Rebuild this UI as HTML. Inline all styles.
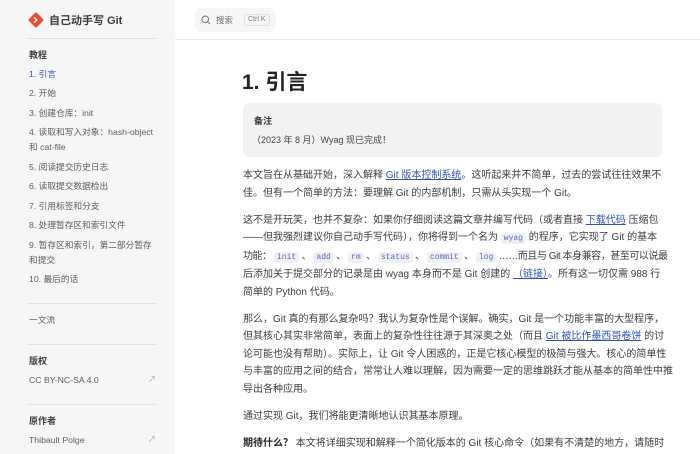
<!DOCTYPE html>
<html><head><meta charset="utf-8"><style>
*{margin:0;padding:0;box-sizing:border-box}
html,body{width:700px;height:454px;overflow:hidden}
body{background:#fff;font-family:"Liberation Sans","Noto Sans CJK SC",sans-serif;color:#3c3c43;position:relative}
.side{position:absolute;left:0;top:0;width:175px;height:454px;background:#f6f6f7}
.a{position:absolute;white-space:nowrap}
.si{left:29px;font-size:8.7px;color:#5c5c63;line-height:15px}
.hr{position:absolute;left:28px;width:128px;height:1px;background:#e2e2e3}
.h{left:29px;font-size:9px;font-weight:bold;color:#3c3c43}
.ext{position:absolute;left:148px;font-size:8px;color:#999}
.main{position:absolute;left:243px;width:430px;height:287px;overflow:hidden;font-size:10px;line-height:17.5px;color:#3c3c43;white-space:nowrap}
.main p{margin-bottom:9.5px}
a{color:#3451b2;text-decoration:underline}
code{font-family:"Liberation Mono",monospace;font-size:8px;background:#eef0f5;color:#5a6aa8;padding:1px 3px;border-radius:3px;letter-spacing:0}
</style></head><body>
<div class="side">
<svg class="a" style="left:28px;top:12px" width="16" height="16" viewBox="0 0 16 16"><rect x="2.3" y="2.3" width="11.4" height="11.4" rx="1.5" transform="rotate(45 8 8)" fill="#e84e31"/><path d="M6 5.5l3 2.5-3 2.5" stroke="#fff" stroke-width="1.3" fill="none"/></svg>
<div class="a" style="left:49px;top:12px;font-size:11px;font-weight:bold;color:#3c3c43">自己动手写 Git</div>
<div class="hr" style="top:38px"></div>
<div class="a h" style="top:48px">教程</div>
<div class="a si" style="top:67px;color:#3451b2">1. 引言</div>
<div class="a si" style="top:86px">2. 开始</div>
<div class="a si" style="top:106px">3. 创建仓库：init</div>
<div class="a si" style="top:125px">4. 读取和写入对象：hash-object<br>和 cat-file</div>
<div class="a si" style="top:160px">5. 阅读提交历史日志</div>
<div class="a si" style="top:179px">6. 读取提交数据检出</div>
<div class="a si" style="top:199px">7. 引用标签和分支</div>
<div class="a si" style="top:218px">8. 处理暂存区和索引文件</div>
<div class="a si" style="top:238px">9. 暂存区和索引，第二部分暂存<br>和提交</div>
<div class="a si" style="top:272px">10. 最后的话</div>
<div class="hr" style="top:303px"></div>
<div class="a si" style="top:313px">一文流</div>
<div class="hr" style="top:344px"></div>
<div class="a h" style="top:354px">版权</div>
<div class="a si" style="top:373px">CC BY-NC-SA 4.0</div><div class="ext" style="top:374px">↗</div>
<div class="hr" style="top:404px"></div>
<div class="a h" style="top:414px">原作者</div>
<div class="a si" style="top:433px">Thibault Polge</div><div class="ext" style="top:434px">↗</div>
</div>
<div class="a" style="left:175px;top:39px;width:525px;height:1px;background:#e8e8ea"></div>
<div class="a" style="left:195px;top:8px;width:81px;height:24px;background:#f6f6f7;border-radius:7px"></div>
<svg class="a" style="left:201px;top:15px" width="10" height="10" viewBox="0 0 10 10"><circle cx="4.3" cy="4.3" r="3.3" stroke="#777" fill="none"/><path d="M6.8 6.8L9 9" stroke="#777"/></svg>
<div class="a" style="left:216px;top:14px;font-size:8.5px;color:#777">搜索</div>
<div class="a" style="left:244px;top:14px;font-size:7px;color:#777;border:1px solid #e2e2e3;padding:0 3px;border-radius:3px;line-height:10px">Ctrl K</div>
<div class="a" style="left:242px;top:66px;font-size:21px;font-weight:bold;color:#222">1. 引言</div>
<div class="a" style="left:243px;top:103px;width:419px;height:54px;background:#f1f2f4;border-radius:6px"></div>
<div class="a" style="left:254px;top:114px;font-size:9px;font-weight:bold;color:#333">备注</div>
<div class="a" style="left:252px;top:133px;font-size:9px;color:#444">（2023 年 8 月）Wyag 现已完成！</div>
<div class="main" style="top:167px">
<p>本文旨在从基础开始，深入解释 <a>Git 版本控制系统</a>。这听起来并不简单，过去的尝试往往效果不<br>佳。但有一个简单的方法：要理解 Git 的内部机制，只需从头实现一个 Git。</p>
<p>这不是开玩笑，也并不复杂：如果你仔细阅读这篇文章并编写代码（或者直接 <a>下载代码</a> 压缩包<br>——但我强烈建议你自己动手写代码），你将得到一个名为 <code>wyag</code> 的程序，它实现了 Git 的基本<br><span style="letter-spacing:-0.45px">功能： <code>init</code> 、 <code>add</code> 、 <code>rm</code> 、 <code>status</code> 、 <code>commit</code> 、 <code>log</code> ……而且与 Git 本身兼容，甚至可以说最</span><br>后添加关于提交部分的记录是由 wyag 本身而不是 Git 创建的 <a>（链接）</a>。所有这一切仅需 988 行<br>简单的 Python 代码。</p>
<p>那么，Git 真的有那么复杂吗？我认为复杂性是个误解。确实，Git 是一个功能丰富的大型程序，<br>但其核心其实非常简单，表面上的复杂性往往源于其深奥之处（而且 <a>Git 被比作墨西哥卷饼</a> 的讨<br>论可能也没有帮助）。实际上，让 Git 令人困惑的，正是它核心模型的极简与强大。核心的简单性<br>与丰富的应用之间的结合，常常让人难以理解，因为需要一定的思维跳跃才能从基本的简单性中推<br>导出各种应用。</p>
<p>通过实现 Git，我们将能更清晰地认识其基本原理。</p>
<p><b style="color:#222">期待什么？</b> 本文将详细实现和解释一个简化版本的 Git 核心命令（如果有不清楚的地方，请随时<br><a>反馈</a>。我会保持代码简单明了，因此 <code>wyag</code> 的功能远不能与真正的 Git 命令行相提并论，但缺失</p>
</div>
</body></html>
